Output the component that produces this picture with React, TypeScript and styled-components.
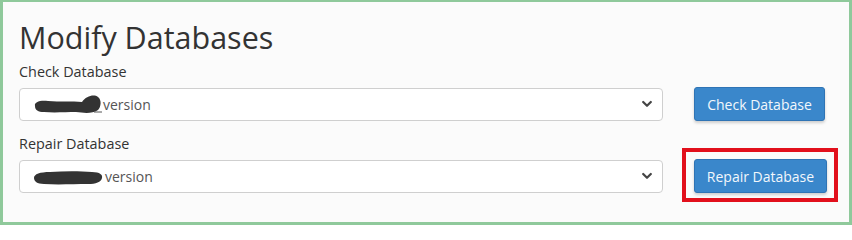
import React from "react";
import styled, { createGlobalStyle } from "styled-components";

const Global = createGlobalStyle`
  html, body { margin: 0; padding: 0; background: #ffffff; }
  body { font-family: "Open Sans", "Liberation Sans", sans-serif; }
`;

const Frame = styled.div`
  box-sizing: border-box;
  width: 852px;
  height: 225px;
  border: 3px solid #8fc99b;
  border-top-width: 2px;
  background: #fbfbfb;
  padding: 19px 0 0 16px;
`;

const Title = styled.h1`
  margin: 0 0 8px 0;
  font-size: 30.5px;
  line-height: 33px;
  font-weight: 400;
  color: #333333;
`;

const Field = styled.div`
  margin-bottom: 13px;
`;

const Label = styled.label`
  display: block;
  font-size: 14.4px;
  line-height: 20px;
  color: #333333;
  margin-bottom: 5px;
`;

const Row = styled.div`
  display: grid;
  grid-template-columns: 644px auto;
  column-gap: 31px;
  align-items: center;
  justify-content: start;
`;

const Select = styled.div`
  box-sizing: border-box;
  height: 33px;
  border: 1px solid #cfcfcf;
  border-radius: 4px;
  background: #ffffff;
  display: flex;
  align-items: center;
  padding: 0 10px 0 12px;
  font-size: 14px;
  color: #555555;
`;

const Value = styled.span`
  display: flex;
  align-items: center;
  flex: 1;
`;

const Blob = styled.svg`
  display: block;
  margin-right: 1px;
`;

const Chevron = styled.svg`
  display: block;
`;

const Button = styled.button<{ $w: number }>`
  position: relative;
  box-sizing: border-box;
  width: ${(p) => p.$w}px;
  height: 34px;
  border: 1px solid #2f74b5;
  border-radius: 3px;
  background: #3a87cb;
  color: #f2f7fc;
  font-family: "Open Sans", "Liberation Sans", sans-serif;
  font-size: 14px;
  padding: 0;
  box-shadow: 0 2px 3px rgba(0, 0, 0, 0.18);
`;

const Highlight = styled.span`
  position: absolute;
  top: -12px;
  left: -13px;
  right: -12px;
  bottom: -10px;
  border: 4px solid #e2101c;
  pointer-events: none;
`;

const ChevronIcon = () => (
  <Chevron width="10" height="8" viewBox="0 0 10 8">
    <path d="M1.2 2 L5 5.8 L8.8 2" fill="none" stroke="#444" strokeWidth="2.2" strokeLinecap="round" strokeLinejoin="round" />
  </Chevron>
);

const Blob1 = () => (
  <Blob width="70" height="22" viewBox="0 0 70 22">
    <path
      d="M3 13 C2 9 8 7 16 8 C28 9 40 8 50 9 C54 3 62 1 66 4 C70 7 69 14 66 17 C60 21 52 20 44 19 C34 19 22 20 12 19 C6 19 3 17 3 13 Z"
      fill="#333333"
    />
    <path d="M62 19 L70 19" stroke="#555" strokeWidth="1" />
  </Blob>
);

const Blob2 = () => (
  <Blob width="72" height="22" viewBox="0 0 72 22">
    <path
      d="M2 13 C2 9 8 7 18 7 C32 6 48 6 60 7 C68 7 71 10 70 13 C69 17 64 19 56 19 C42 19 26 20 12 19 C5 19 2 16 2 13 Z"
      fill="#333333"
    />
  </Blob>
);

export default function App() {
  return (
    <>
      <Global />
      <Frame>
        <Title>Modify Databases</Title>
        <Field>
          <Label>Check Database</Label>
          <Row>
            <Select>
              <Value>
                <Blob1 />
                version
              </Value>
              <ChevronIcon />
            </Select>
            <Button $w={131}>Check Database</Button>
          </Row>
        </Field>
        <Field>
          <Label>Repair Database</Label>
          <Row>
            <Select>
              <Value>
                <Blob2 />
                version
              </Value>
              <ChevronIcon />
            </Select>
            <Button $w={133}>
              Repair Database
              <Highlight />
            </Button>
          </Row>
        </Field>
      </Frame>
    </>
  );
}
